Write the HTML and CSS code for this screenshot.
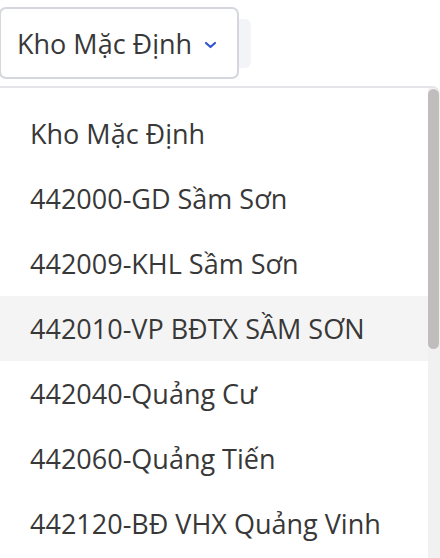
FILE: index.html
```html
<!DOCTYPE html>
<html lang="vi">
<head>
<meta charset="utf-8">
<link rel="stylesheet" href="styles.css">
</head>
<body>
<div class="page">
  <div class="top">
    <button class="select">
      <span class="select-label">Kho Mặc Định</span>
      <svg class="chev" width="13" height="8" viewBox="0 0 13 8"><path d="M2 2 L6.5 6 L11 2" fill="none" stroke="#3354d1" stroke-width="2.2" stroke-linecap="round" stroke-linejoin="round"/></svg>
    </button>
    <div class="ghost"></div>
  </div>
  <div class="menu">
    <ul class="list">
      <li class="item">Kho Mặc Định</li>
      <li class="item">442000-GD Sầm Sơn</li>
      <li class="item">442009-KHL Sầm Sơn</li>
      <li class="item active">442010-VP BĐTX SẦM SƠN</li>
      <li class="item">442040-Quảng Cư</li>
      <li class="item">442060-Quảng Tiến</li>
      <li class="item">442120-BĐ VHX Quảng Vinh</li>
    </ul>
    <div class="scroll"><div class="thumb"></div></div>
  </div>
</div>
</body>
</html>
```
FILE: styles.css
```css
* { box-sizing: border-box; }
html, body { margin: 0; padding: 0; background: #fff; }
body { width: 440px; height: 558px; overflow: hidden; font-family: "Open Sans", "Noto Sans", sans-serif; color: #383838; }
.page { display: flex; flex-direction: column; }
.top { display: flex; padding: 7px 0 0 0; height: 86px; align-items: flex-start; }
.select {
  display: flex; align-items: center; gap: 12px;
  margin-left: -1px;
  width: 240px; height: 72px;
  padding: 0 0 0 16px;
  background: #fff;
  border: 2px solid #d4d7dd; border-radius: 7px;
  font: inherit; font-size: 27px; color: #383838;
}
.chev { margin-top: 3px; flex: none; }
.ghost { width: 12px; height: 49px; margin-top: 12px; background: #f3f4f8; border-radius: 0 6px 6px 0; }
.menu { position: relative; border-top: 2px solid #e3e5e9; border-top-right-radius: 8px; height: 472px; overflow: hidden; }
.list { list-style: none; margin: 0; padding: 13px 0 0 0; }
.item { height: 65px; display: flex; align-items: center; padding-left: 30px; font-size: 27px; white-space: nowrap; }
.item.active { background: #f4f4f4; }
.scroll { position: absolute; top: 0; right: 0; width: 12px; height: 100%; background: #f1f1f1; }
.thumb { width: 11px; height: 260px; background: #c1bdbd; border-radius: 6px; margin-top: 1px; }
```
